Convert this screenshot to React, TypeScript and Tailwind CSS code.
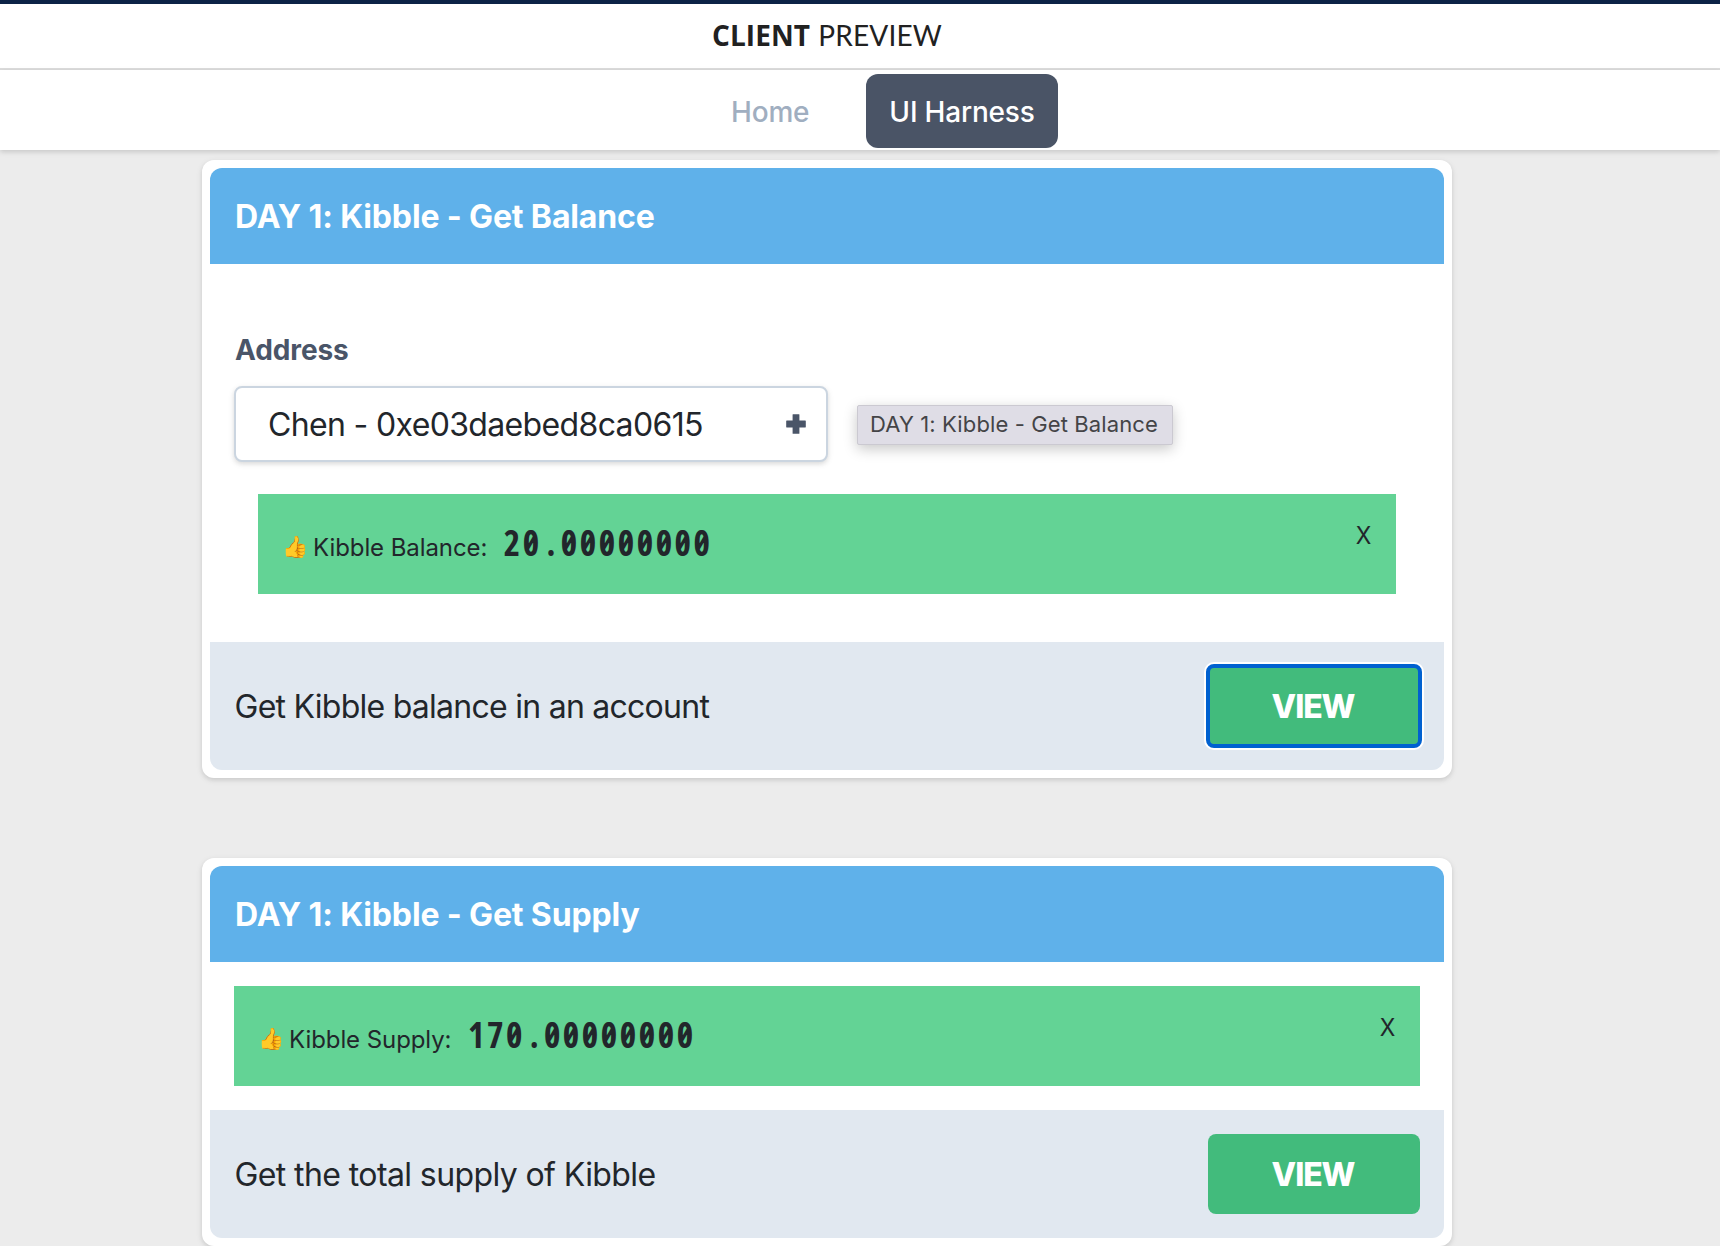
import type { ReactNode } from "react";

function ViewButton({ focused = false }: { focused?: boolean }) {
  return (
    <button
      className={
        focused
          ? "h-20 w-[212px] rounded-md bg-[#42bb7c] pt-[2px] pr-[2px] text-[32px] font-extrabold tracking-[-1.1px] text-white outline-4 -outline-offset-2 outline-[#0061d0] shadow-[0_0_0_4px_#ffffff]"
          : "h-20 w-[212px] rounded-lg bg-[#42bb7c] pt-[2px] pr-[2px] text-[32px] font-extrabold tracking-[-1.1px] text-white"
      }
    >
      VIEW
    </button>
  );
}

function Result({ label, whole, fraction }: { label: string; whole: string; fraction: string }) {
  return (
    <div className="flex h-[100px] items-start justify-between bg-[#63d395] px-6 text-[#22262b]">
      <div className="flex h-[100px] items-baseline pt-[31px] text-2xl leading-[36px] whitespace-nowrap">
        <span className="relative -top-0.5 w-[31px] text-[21px]">👍</span>
        <span className="tracking-[-0.08px]">{label}</span>
        <span className="ml-[16.5px] font-['Open_Sans',sans-serif] text-[35px] leading-[36px] font-bold tracking-[2.55px] [font-feature-settings:'zero'] [font-stretch:75%]">
          {whole}
          <span className="inline-block w-[19px] pl-[2px] text-center">.</span>
          {fraction}
        </span>
      </div>
      <button className="mt-6 mr-px text-2xl leading-[36px]">
        <span className="inline-block origin-right scale-x-[.95]">X</span>
      </button>
    </div>
  );
}

type CardProps = { title: string; description: ReactNode; focused?: boolean; children: ReactNode };

function Card({ title, description, focused, children }: CardProps) {
  return (
    <section className="w-[1250px] rounded-xl bg-white p-2 shadow-[0_2px_6px_rgba(0,0,0,0.1),0_2px_4px_rgba(0,0,0,0.06)]">
      <h2 className="flex h-24 items-center rounded-t-xl bg-[#5fb1ea] pt-[2px] pl-[25px] text-[32px] font-bold tracking-[-0.14px] text-white">{title}</h2>
      {children}
      <footer className="flex h-32 items-center justify-between rounded-b-xl bg-[#e1e8f0] pr-6 pl-[24.5px] text-[32px]">
        {description}
        <ViewButton focused={focused} />
      </footer>
    </section>
  );
}

export default function App() {
  return (
    <div className="h-[1246px] w-[1720px] overflow-hidden bg-[#ececec] font-['Inter','Liberation_Sans',sans-serif] text-[#22262b]">
      <div className="h-1 bg-[#0c2346]" />
      <header className="h-[66px] border-b-2 border-[#dcdcdc] bg-white">
        <h1 className="flex h-[62px] w-[1654px] items-baseline justify-center gap-[8px] pt-[10px] text-[28px] leading-[42px] text-[#212121]">
          <span className="font-['Open_Sans',sans-serif] font-bold tracking-[0.1px]">CLIENT</span>
          <span className="font-['Lato',sans-serif] tracking-[0.2px]">PREVIEW</span>
        </h1>
      </header>
      <nav className="flex h-20 items-start bg-white pt-1 pl-[707px] text-[28px] font-medium tracking-[-0.19px] shadow-[0_2px_6px_rgba(0,0,0,0.1),0_2px_4px_rgba(0,0,0,0.06)]">
        <a className="flex h-[74px] w-[159px] items-center px-6 pt-[2px] text-[#a0aec0]">Home</a>
        <a className="flex h-[74px] w-48 items-center justify-center rounded-xl bg-[#4a5466] pt-[2px] text-white">UI Harness</a>
      </nav>

      <main className="flex w-[1654px] flex-col items-center gap-20 pt-[10px]">
        <Card
          title="DAY 1: Kibble - Get Balance"
          description={<p className="pt-[2px] tracking-[-0.74px]">Get Kibble balance in an account</p>}
          focused
        >
          <div className="h-[378px] px-6 pt-[65px]">
            <label className="block pl-px text-[28px] leading-[42px] font-bold tracking-[-0.1px] text-[#4a5568]">Address</label>
            <div className="mt-[15px] flex items-center">
              <div className="flex h-[76px] w-[594px] items-center justify-between rounded-lg border-2 border-[#cbd5e0] bg-white pr-[20px] pl-8 shadow-[0_2px_6px_rgba(0,0,0,0.1),0_2px_4px_rgba(0,0,0,0.06)]">
                <span className="pt-[2px] text-[32px] tracking-[-0.65px]">Chen - 0xe03daebed8ca0615</span>
                <svg className="size-5" viewBox="0 0 20 20" fill="#4a5568">
                  <path d="M7 .2h6q.4 0 .4.400v6h6q.4 0 .4.400v6q0 .4-.4.400h-6v6q0 .4-.4.400H7q-.4 0-.4-.400v-6h-6q-.4 0-.4-.400V7q0-.4.4-.400h6v-6q0-.4.4-.400z" />
                </svg>
              </div>
              <div className="mt-px ml-[29px] flex h-10 w-[316px] items-center rounded-[2px] border border-[#cbc9d1] bg-[#dfdde6] pl-[12px] text-[22px] tracking-[0.12px] whitespace-nowrap text-[#444447] shadow-[0_4px_14px_rgba(0,0,0,0.22)]">
                DAY 1: Kibble - Get Balance
              </div>
            </div>
            <div className="mx-6 mt-8">
              <Result label="Kibble Balance:" whole="20" fraction="00000000" />
            </div>
          </div>
        </Card>

        <Card
          title="DAY 1: Kibble - Get Supply"
          description={<p className="pt-[2px] tracking-[-0.6px]">Get the total supply of Kibble</p>}
        >
          <div className="p-6">
            <Result label="Kibble Supply:" whole="170" fraction="00000000" />
          </div>
        </Card>
      </main>
    </div>
  );
}
